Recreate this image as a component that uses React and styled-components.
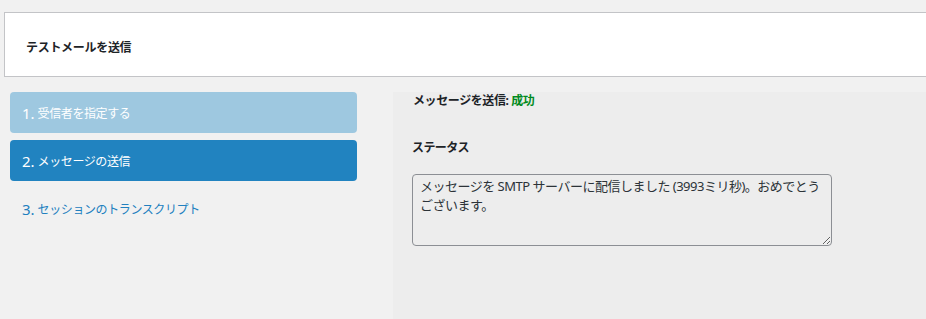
import React from "react";
import styled, { createGlobalStyle } from "styled-components";

const GlobalStyle = createGlobalStyle`
  html, body {
    margin: 0;
    padding: 0;
    background: #f1f1f1;
    height: 100%;
  }
  body {
    font-family: "Noto Sans", "Noto Sans CJK JP", sans-serif;
    color: #1d2327;
    overflow: hidden;
  }
  #root {
    min-height: 100%;
  }
`;

const Page = styled.div`
  padding: 12px 0 0 4px;
  min-height: 319px;
  box-sizing: border-box;
  display: flex;
  flex-direction: column;
`;

const Header = styled.div`
  background: #fff;
  border: 1px solid #c3c4c7;
  border-right: none;
  height: 65px;
  box-sizing: border-box;
  display: flex;
  align-items: center;
  padding: 5px 0 0 21px;
`;

const Title = styled.h1`
  margin: 0;
  font-size: 12px;
  font-weight: 700;
  letter-spacing: -0.3px;
  color: #1d2327;
`;

const Body = styled.div`
  flex: 1;
  display: flex;
  margin-top: 15px;
`;

const Steps = styled.nav`
  width: 347px;
  margin-left: 6px;
  display: flex;
  flex-direction: column;
  gap: 7px;
`;

const Step = styled.div`
  height: 41px;
  border-radius: 4px;
  display: flex;
  align-items: center;
  padding-left: 12px;
  box-sizing: border-box;
  background: ${(p) => (p.$state === "done" ? "#9ec8e0" : p.$state === "active" ? "#2183c0" : "transparent")};
  color: ${(p) => (p.$state === "todo" ? "#2180bf" : "#fff")};
  font-size: 12px;
  letter-spacing: -0.4px;
`;

const Num = styled.span`
  font-size: 15px;
  margin-right: 3px;
  letter-spacing: 0;
`;

const Panel = styled.section`
  flex: 1;
  margin-left: 36px;
  background: #ededed;
  padding: 0 0 0 19px;
`;

const Result = styled.div`
  font-size: 12px;
  font-weight: 700;
  letter-spacing: -0.4px;
  line-height: 17px;
  padding-left: 1px;
`;

const Success = styled.span`
  color: #008a20;
`;

const Label = styled.h2`
  margin: 31px 0 0;
  font-size: 12px;
  font-weight: 700;
  letter-spacing: -0.6px;
  line-height: 16px;
`;

const StatusBox = styled.textarea`
  display: block;
  margin-top: 18px;
  width: 420px;
  height: 72px;
  box-sizing: border-box;
  border: 1px solid #8c8f94;
  border-radius: 4px;
  background: #ededed;
  color: #2c3338;
  font-family: "Noto Sans", "Noto Sans CJK JP", sans-serif;
  font-size: 13px;
  line-height: 19px;
  padding: 2px 7px;
  letter-spacing: -0.5px;
  resize: both;
  outline: none;
`;

const steps = [
  { n: "1.", label: "受信者を指定する", state: "done" },
  { n: "2.", label: "メッセージの送信", state: "active" },
  { n: "3.", label: "セッションのトランスクリプト", state: "todo" },
];

export default function App() {
  return (
    <>
      <GlobalStyle />
      <Page>
        <Header>
          <Title>テストメールを送信</Title>
        </Header>
        <Body>
          <Steps>
            {steps.map((s) => (
              <Step key={s.n} $state={s.state}>
                <Num>{s.n}</Num>
                {s.label}
              </Step>
            ))}
          </Steps>
          <Panel>
            <Result>
              メッセージを送信: <Success>成功</Success>
            </Result>
            <Label>ステータス</Label>
            <StatusBox
              readOnly
              defaultValue="メッセージを SMTP サーバーに配信しました (3993ミリ秒)。おめでとうございます。"
            />
          </Panel>
        </Body>
      </Page>
    </>
  );
}
